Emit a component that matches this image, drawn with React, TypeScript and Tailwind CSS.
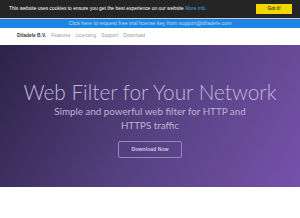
export default function App() {
  return (
    <div className="w-[300px] h-[218px] overflow-hidden bg-white font-['Liberation_Sans',Arial,sans-serif]">
      {/* Cookie bar */}
      <div className="h-[18px] bg-[#252525] flex items-center justify-between pl-[9px] pr-[8px]">
        <p className="text-[4.95px] text-white leading-none whitespace-nowrap">
          This website uses cookies to ensure you get the best experience on our website{' '}
          <span className="text-[#31a8f0]">More info</span>
        </p>
        <button className="w-[36px] h-[10px] bg-[#f1d600] text-black text-[4.9px] leading-none">
          Got it!
        </button>
      </div>

      {/* Trial banner */}
      <div className="h-[1px] bg-[#c9c9c9]" />
      <div className="h-[9px] bg-[#1e86e2] flex items-center justify-center">
        <span className="text-[5.3px] leading-none text-[#b4dcff]">
          Click here to request free trial license key from support@diladele.com
        </span>
      </div>

      {/* Nav */}
      <nav className="h-[17px] flex items-center pl-[17px] gap-[5px] text-[4.9px] leading-none">
        <span className="font-bold text-[#3a3a3a]">Diladele B.V.</span>
        <span className="text-[#9a9a9a]">Features</span>
        <span className="text-[#9a9a9a]">Licensing</span>
        <span className="text-[#9a9a9a]">Support</span>
        <span className="text-[#9a9a9a]">Download</span>
      </nav>

      {/* Hero */}
      <section className="h-[142px] bg-[linear-gradient(120deg,#2c2348_0%,#54407f_50%,#7652ab_100%)] flex flex-col items-center pt-[36px] font-['Lato',sans-serif]">
        <h1 className="text-[20.8px] leading-[22px] font-light text-[#c2b7da] whitespace-nowrap">
          Web Filter for Your Network
        </h1>
        <p className="mt-[1px] max-w-[216px] text-center text-[9.8px] leading-[14px] text-[#bdb2d4]">
          Simple and powerful web filter for HTTP and HTTPS traffic
        </p>
        <button className="mt-[9px] w-[64px] h-[17px] border border-[#9a86bd] rounded-[2px] text-[5.2px] font-bold text-[#cdc2e0] font-['Liberation_Sans',Arial,sans-serif]">
          Download Now
        </button>
      </section>

      {/* Features */}
      <section className="pt-[31px] flex justify-center font-['Lato',sans-serif]">
        <h2 className="text-[16px] leading-none text-[#333]">Key Features</h2>
      </section>
    </div>
  );
}
